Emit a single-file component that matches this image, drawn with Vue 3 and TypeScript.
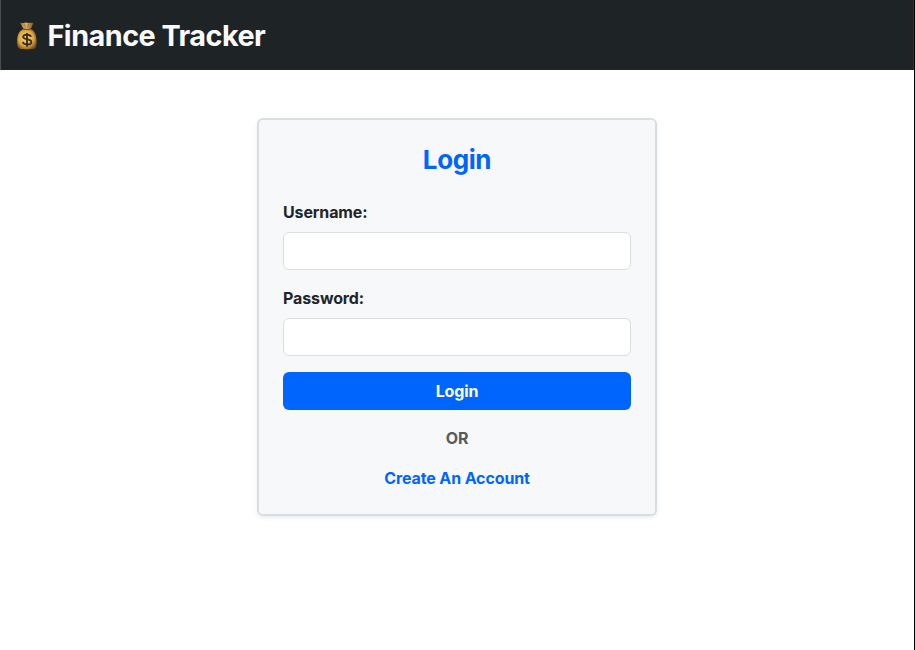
<script setup lang="ts">
import { ref } from 'vue'

const username = ref('')
const password = ref('')
</script>

<template>
  <div class="page">
    <header class="navbar">
      <svg class="logo" viewBox="0 0 24 28" aria-hidden="true">
        <defs>
          <radialGradient id="bag" cx="46%" cy="45%" r="62%">
            <stop offset="0" stop-color="#f8d06c" />
            <stop offset="0.6" stop-color="#dfaa42" />
            <stop offset="1" stop-color="#75491a" />
          </radialGradient>
          <linearGradient id="neck" x1="0" y1="0" x2="1" y2="0">
            <stop offset="0" stop-color="#a9793d" />
            <stop offset="0.45" stop-color="#dfb06a" />
            <stop offset="1" stop-color="#80501f" />
          </linearGradient>
        </defs>
        <path d="M5.3 .8Q8 1.6 9.4 .7Q12 .1 13.3 1Q16 .3 18.5 1.1L15.6 7.2H8.5Z" fill="url(#neck)" />
        <path d="M7.8 7.2C4.2 8.8 2.3 13 2.2 18.5C2 24.2 2.8 26.8 6.8 27.1Q12 27.7 17.4 27.1C21.3 26.7 21.8 24.2 21.5 18.2C21.2 12.8 19.6 8.7 16.1 7.2Z" fill="url(#bag)" />
        <path d="M8 6.8Q12 8.3 16 6.8" fill="none" stroke="#714822" stroke-width="1" />
        <path d="M9 2L11 5.7M13.5 1.7L12.8 5.5" stroke="#815829" stroke-width=".6" />
        <path d="M16 14.7C15 12.1 8.5 11.8 8.2 14.8C7.9 17.8 16.4 16.5 16.4 20C16.4 23.2 8.7 23.5 7.8 19.9M12 11V24.7" fill="none" stroke="#302b20" stroke-width="1.8" />
      </svg>
      <span class="brand">Finance Tracker</span>
    </header>
    <main class="content">
      <form class="card" @submit.prevent>
        <h2>Login</h2>
        <label for="username">Username:</label>
        <input id="username" v-model="username" type="text" />
        <label for="password">Password:</label>
        <input id="password" v-model="password" type="password" />
        <button type="submit">Login</button>
        <p class="separator">OR</p>
        <a class="register" href="#">Create An Account</a>
      </form>
    </main>
  </div>
</template>

<style>
body {
  margin: 0;
  overflow: hidden;
}
</style>

<style scoped>
.page {
  box-sizing: border-box;
  height: 100vh;
  border-right: 1px solid #000;
  background: #fff;
  color: #212529;
  font: 650 16px/24px Inter, sans-serif;
  letter-spacing: -0.12px;
}
.navbar {
  box-sizing: border-box;
  height: 70px;
  display: flex;
  align-items: center;
  padding: 2px 15px 0 13.5px;
  border-left: 1px solid #4a4f52;
  border-right: 1px solid #30363a;
  background: #1e2326;
}
.logo {
  width: 24px;
  height: 28px;
  flex: none;
}
.brand {
  margin-left: 9px;
  color: #f8f9fa;
  font-size: 28.8px;
  line-height: 44px;
  font-weight: 670;
  letter-spacing: -0.53px;
}
.content {
  display: flex;
  justify-content: center;
  padding-top: 48px;
}
.card {
  box-sizing: border-box;
  width: 400px;
  height: 398px;
  display: flex;
  flex-direction: column;
  padding: 24px;
  border: 2px solid #d9dee2;
  border-radius: 6px;
  background: #f7f8fa;
  box-shadow: 0 2px 4px rgba(0, 0, 0, 0.075);
}
h2 {
  margin: 0 0 24px;
  color: #0065fc;
  font-size: 26px;
  line-height: 32px;
  font-weight: 670;
  letter-spacing: -0.4px;
  text-align: center;
}
label {
  margin-bottom: 8px;
}
input {
  box-sizing: border-box;
  width: 100%;
  height: 38px;
  margin: 0 0 16px;
  padding: 6px 12px;
  border: 1px solid #d9dee2;
  border-radius: 6px;
  outline: none;
  background: #fff;
  font: inherit;
}
button {
  height: 38px;
  padding: 0;
  border: 0;
  border-radius: 6px;
  background: #0065fc;
  color: #fff;
  font: inherit;
  letter-spacing: -0.12px;
}
.separator {
  margin: 16px 0;
  color: #585b5e;
  text-align: center;
}
.register {
  color: #0065fc;
  text-align: center;
  text-decoration: none;
}
</style>
